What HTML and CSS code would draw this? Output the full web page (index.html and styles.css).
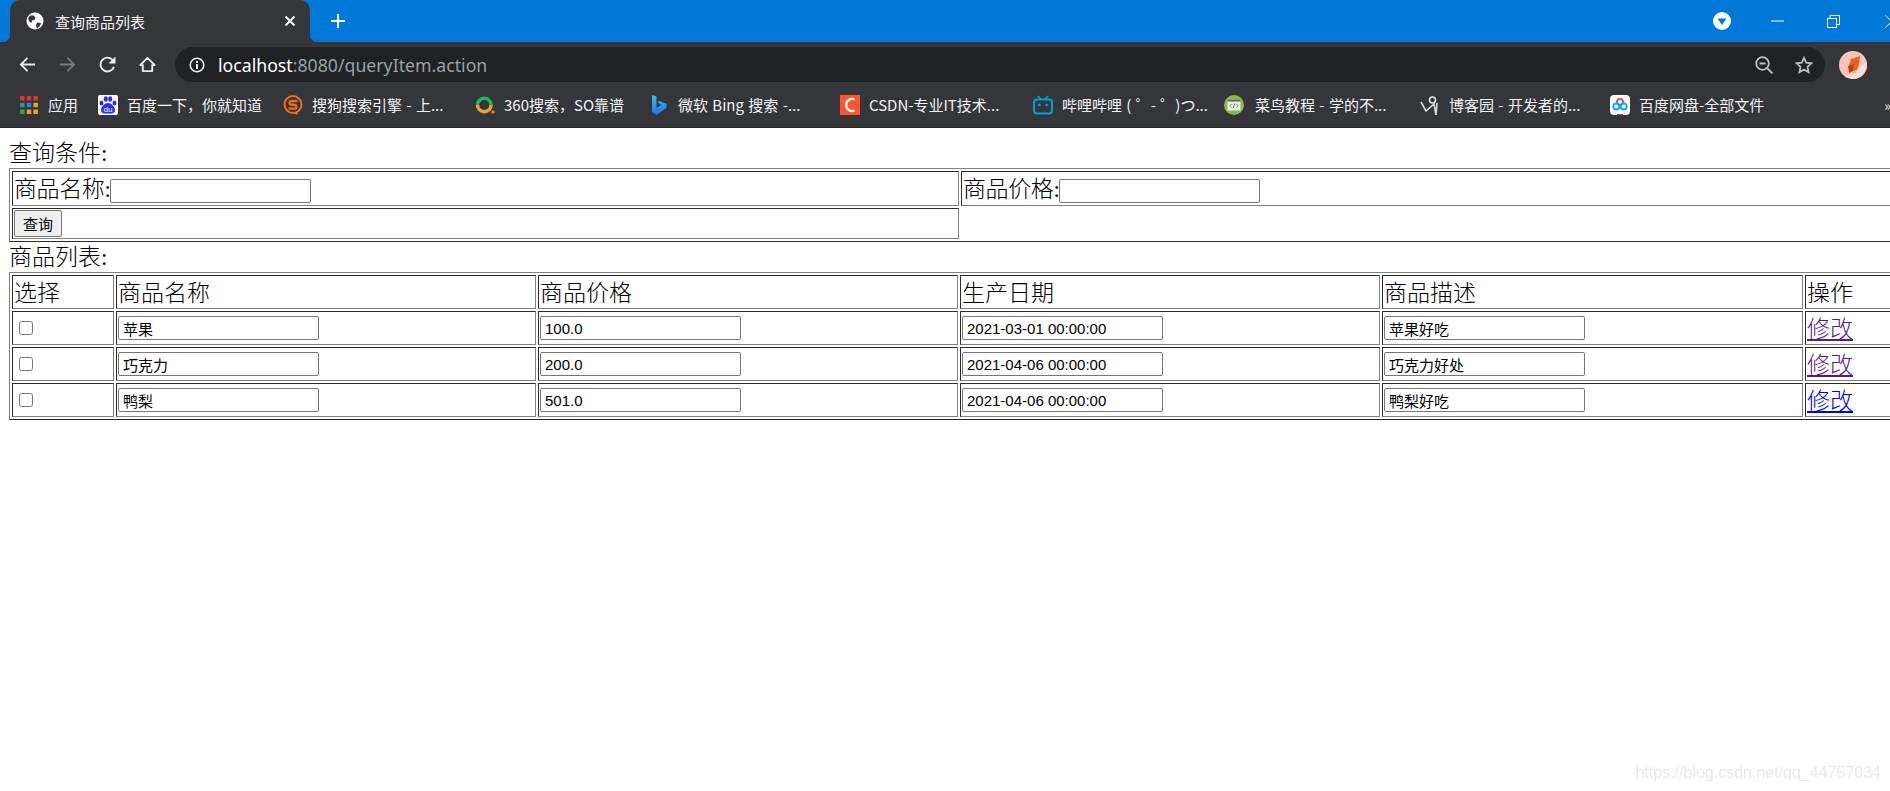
FILE: index.html
```html
<!DOCTYPE html>
<html lang="zh-CN">
<head>
    <meta charset="UTF-8">
    <title>查询商品列表</title>
    <link rel="stylesheet" href="styles.css">
</head>
<body>
    <div class="browser">
        <div class="tabstrip">
            <div class="tab">
                <svg class="tab-icon" viewBox="0 0 18 18"><circle cx="9" cy="9" r="8.5" fill="#fff"/><path d="M4 3.500l3.500 0 2 2-1 2.500-2.500.5-.5 2.500-2-1.500-1.500-3zM11 10.500l4 .5-1.500 3.500-2.500 2-1-3z" fill="#35363a"/></svg>
                <span class="tab-title">查询商品列表</span>
                <svg class="tab-close" viewBox="0 0 12 12"><path d="M1.500 1.500l9 9M10.500 1.500l-9 9" stroke="#fff" stroke-width="1.800"/></svg>
            </div>
            <svg class="new-tab" viewBox="0 0 16 16"><path d="M8 1v14M1 8h14" stroke="#fff" stroke-width="2"/></svg>
            <div class="window-controls">
                <svg class="profile-drop" viewBox="0 0 18 18"><circle cx="9" cy="9" r="9" fill="#fff"/><path d="M4.500 6.500h9L9 13z" fill="#0078d7"/></svg>
                <svg class="win-min" viewBox="0 0 13 2"><path d="M0 1h13" stroke="#fff"/></svg>
                <svg class="win-max" viewBox="0 0 13 13"><path d="M.5 3.500h9v9h-9zM3 3.500v-3h9.500v9h-3" fill="none" stroke="#fff"/></svg>
                <svg class="win-close" viewBox="0 0 13 13"><path d="M.5.5l12 12M12.500.5l-12 12" stroke="#fff"/></svg>
            </div>
        </div>
        <div class="toolbar">
            <svg class="nav" viewBox="0 0 18 18"><path d="M17 9H2M9 2L2 9l7 7" fill="none" stroke="#e8eaed" stroke-width="2"/></svg>
            <svg class="nav" viewBox="0 0 18 18"><path d="M1 9h15M9 2l7 7-7 7" fill="none" stroke="#77797c" stroke-width="2"/></svg>
            <svg class="nav" viewBox="0 0 18 18"><path d="M15.800 11.500A7.300 7.300 0 1 1 14 3.800L16 6.300" fill="none" stroke="#e8eaed" stroke-width="2"/><path d="M17.500 .5v7.500H10z" fill="#e8eaed"/></svg>
            <svg class="nav" viewBox="0 0 18 18"><path d="M9 2L1.500 9.500H4V16h10V9.500h2.500z" fill="none" stroke="#e8eaed" stroke-width="2" stroke-linejoin="round"/></svg>
            <div class="omnibox">
                <svg class="info" viewBox="0 0 16 16"><circle cx="8" cy="8" r="6.800" fill="none" stroke="#e8eaed" stroke-width="1.600"/><path d="M7 7h2v5H7zM7 4h2v2H7z" fill="#e8eaed"/></svg>
                <span class="url"><span class="host">localhost</span>:8080/queryItem.action</span>
                <svg class="zoom-out" viewBox="0 0 18 18"><circle cx="7.500" cy="7.500" r="6.300" fill="none" stroke="#bdc1c6" stroke-width="1.800"/><path d="M4.500 7.500h6M12 12l5.500 5.500" stroke="#bdc1c6" stroke-width="1.800"/></svg>
                <svg class="star" viewBox="0 0 18 18"><path d="M9 1.800l2.200 4.900 5.300.6-4 3.600 1.100 5.300L9 13.500l-4.600 2.700 1.100-5.300-4-3.600 5.300-.6z" fill="none" stroke="#bdc1c6" stroke-width="1.700"/></svg>
            </div>
            <svg class="avatar" viewBox="0 0 28 28"><circle cx="14" cy="14" r="14" fill="#f7c4b8"/><path d="M28 11L6 26l8 2a14 14 0 0 0 14-14z" fill="#fbdcd3"/><path d="M12 8l9-3-1 8-2 6-6 2-2-7z" fill="#e8641e"/><path d="M9 15l6-2-1 7-4 2z" fill="#b8430f"/><path d="M13 21l4-2v3l-3 1z" fill="#e8b888"/></svg>
        </div>
        <div class="bookmarks">
            <div class="bm"><svg class="bm-icon" viewBox="0 0 18 18"><path d="M1 1h4v4H1zM7 1h4v4H7zM13 1h4v4h-4z" fill="#d9392f"/><path d="M1 7h4v4H1z" fill="#2f9e6e"/><path d="M7 7h4v4H7z" fill="#2f7fe0"/><path d="M13 7h4v4h-4z" fill="#e8a820"/><path d="M1 13h4v4H1z" fill="#34a853"/><path d="M7 13h4v4H7zM13 13h4v4h-4z" fill="#f0a010"/></svg><span>应用</span></div>
            <div class="bm"><svg class="bm-icon" viewBox="0 0 20 20"><rect width="20" height="20" rx="2" fill="#fff"/><path d="M10 8c-3 0-7 3.500-7 7 0 3.500 3.500 4 7 3.500 3.500.5 7 0 7-3.500 0-3.500-4-7-7-7z" fill="#2932e1"/><ellipse cx="3.500" cy="8" rx="2" ry="2.600" fill="#2932e1"/><ellipse cx="7.800" cy="4" rx="2" ry="2.800" fill="#2932e1"/><ellipse cx="12.200" cy="4" rx="2" ry="2.800" fill="#2932e1"/><ellipse cx="16.500" cy="8" rx="2" ry="2.600" fill="#2932e1"/><text x="10" y="17" class="du">du</text></svg><span>百度一下，你就知道</span></div>
            <div class="bm"><svg class="bm-icon" viewBox="0 0 20 20"><circle cx="10" cy="9.500" r="8.500" fill="none" stroke="#f26a1b" stroke-width="2"/><path d="M14.500 6H8a2 2 0 0 0 0 3.800h4a2 2 0 0 1 0 3.800H5.500" fill="none" stroke="#f26a1b" stroke-width="2.400"/><path d="M11 18h4l-1 2z" fill="#f26a1b"/></svg><span>搜狗搜索引擎 - 上...</span></div>
            <div class="bm"><svg class="bm-icon" viewBox="0 0 20 20"><path d="M2.500 10a6.800 6.800 0 0 1 13.600 0" fill="none" stroke="#1fb45c" stroke-width="3.400"/><path d="M2.500 10a6.800 6.800 0 0 0 13.600 0" fill="none" stroke="#f0a030" stroke-width="3.400"/><circle cx="18" cy="17" r="1.800" fill="#f07820"/></svg><span>360搜索，SO靠谱</span></div>
            <div class="bm"><svg class="bm-icon" viewBox="0 0 20 20"><defs><linearGradient id="bing" x1="0" y1="0" x2="0" y2="1"><stop offset="0" stop-color="#35c1f1"/><stop offset="1" stop-color="#2470e8"/></linearGradient></defs><path d="M3 0l4.500 1.500v11.500l5-3-2.500-1.200-1-3 8.500 3v4L7.500 20 3 17z" fill="url(#bing)"/></svg><span>微软 Bing 搜索 -...</span></div>
            <div class="bm"><svg class="bm-icon" viewBox="0 0 20 20"><rect width="20" height="20" fill="#fc5531"/><path d="M14.500 4.500a6 6 0 1 0 0 11" fill="none" stroke="#fff" stroke-width="2.200"/></svg><span>CSDN-专业IT技术...</span></div>
            <div class="bm"><svg class="bm-icon" viewBox="0 0 20 20"><path d="M5 1l3 3.500M15 1l-3 3.500" stroke="#00a1d6" stroke-width="1.600"/><rect x="1" y="4.500" width="18" height="14" rx="3" fill="none" stroke="#00a1d6" stroke-width="2"/><path d="M5 10.500l2.500-1M15 10.500l-2.500-1" stroke="#00a1d6" stroke-width="2"/></svg><span>哔哩哔哩 ( ゜- ゜)つ...</span></div>
            <div class="bm bm-wide"><svg class="bm-icon" viewBox="0 0 20 20"><circle cx="10" cy="10" r="10" fill="#8cb848"/><rect x="3.500" y="4.500" width="13" height="11" fill="#e8ece0"/><rect x="3.500" y="4.500" width="13" height="2" fill="#5c6650"/><path d="M7.500 9L6 10.700l1.500 1.700M12.500 9l1.500 1.700-1.500 1.700M10.700 8.500l-1.400 4.500" fill="none" stroke="#5c6650" stroke-width=".8"/></svg><span>菜鸟教程 - 学的不...</span></div>
            <div class="bm"><svg class="bm-icon" viewBox="0 0 20 20"><circle cx="12.500" cy="5" r="3" fill="none" stroke="#e8e8e8" stroke-width="1.500"/><path d="M1 7l5 9 8-7 2 11 1-12" fill="none" stroke="#dcdcdc" stroke-width="1.600"/></svg><span>博客园 - 开发者的...</span></div>
            <div class="bm"><svg class="bm-icon" viewBox="0 0 20 20"><rect width="20" height="20" rx="4" fill="#fff"/><circle cx="10" cy="6.800" r="3" fill="none" stroke="#ef3f4b" stroke-width="1.800"/><circle cx="6.300" cy="11.500" r="3" fill="none" stroke="#06a7ff" stroke-width="1.800"/><circle cx="13.700" cy="11.500" r="3" fill="none" stroke="#06a7ff" stroke-width="1.800"/><path d="M7 19h3v1H7z" fill="#2468f2"/><path d="M10 19h3v1h-3z" fill="#ef3f4b"/></svg><span>百度网盘-全部文件</span></div>
            <span class="bm-more">»</span>
        </div>
    </div>

    <div class="page">
        <form>
            <div class="caption">查询条件:</div>
            <table class="grid search-table">
                <colgroup><col class="col-half"><col class="col-half"></colgroup>
                <tr class="search-row">
                    <td>商品名称:<input type="text" class="field"></td>
                    <td>商品价格:<input type="text" class="field"></td>
                </tr>
                <tr class="button-row">
                    <td><button type="button" class="query">查询</button></td>
                </tr>
            </table>
            <div class="caption">商品列表:</div>
            <table class="grid item-table">
                <colgroup>
                    <col class="col-check">
                    <col class="col-wide">
                    <col class="col-wide">
                    <col class="col-wide">
                    <col class="col-desc">
                    <col class="col-action">
                </colgroup>
                <tr>
                    <td class="text-cell">选择</td>
                    <td class="text-cell">商品名称</td>
                    <td class="text-cell">商品价格</td>
                    <td class="text-cell">生产日期</td>
                    <td class="text-cell">商品描述</td>
                    <td class="text-cell">操作</td>
                </tr>
                <tr>
                    <td><input type="checkbox" class="pick"></td>
                    <td><input type="text" class="field" value="苹果"></td>
                    <td><input type="text" class="field" value="100.0"></td>
                    <td><input type="text" class="field" value="2021-03-01 00:00:00"></td>
                    <td><input type="text" class="field" value="苹果好吃"></td>
                    <td class="text-cell"><a href="#" class="visited">修改</a></td>
                </tr>
                <tr>
                    <td><input type="checkbox" class="pick"></td>
                    <td><input type="text" class="field" value="巧克力"></td>
                    <td><input type="text" class="field" value="200.0"></td>
                    <td><input type="text" class="field" value="2021-04-06 00:00:00"></td>
                    <td><input type="text" class="field" value="巧克力好处"></td>
                    <td class="text-cell"><a href="#" class="visited">修改</a></td>
                </tr>
                <tr>
                    <td><input type="checkbox" class="pick"></td>
                    <td><input type="text" class="field" value="鸭梨"></td>
                    <td><input type="text" class="field" value="501.0"></td>
                    <td><input type="text" class="field" value="2021-04-06 00:00:00"></td>
                    <td><input type="text" class="field" value="鸭梨好吃"></td>
                    <td class="text-cell"><a href="#">修改</a></td>
                </tr>
            </table>
        </form>
        <div class="watermark">https://blog.csdn.net/qq_44757034</div>
    </div>
</body>
</html>
```

FILE: styles.css
```css
html, body {
    height: 100%;
    margin: 0;
    overflow: hidden;
    background-color: #fff;
}
body {
    display: flex;
    flex-direction: column;
}

/* browser frame */
.browser {
    background-color: #35363a;
    color: #f1f3f4;
    font-family: "Noto Sans CJK SC", "Noto Sans", sans-serif;
}
.tabstrip {
    display: flex;
    align-items: center;
    height: 42px;
    padding-left: 10px;
    background-color: #0078d7;
}
.tab {
    position: relative;
    display: flex;
    align-items: center;
    width: 300px;
    height: 42px;
    box-sizing: border-box;
    padding: 0 14px 0 16px;
    background-color: #35363a;
    border-radius: 10px 10px 0 0;
}
.tab::before,
.tab::after {
    content: "";
    position: absolute;
    bottom: 0;
    width: 8px;
    height: 8px;
}
.tab::before {
    left: -8px;
    background: radial-gradient(circle at 0 0, transparent 8px, #35363a 8.5px);
}
.tab::after {
    right: -8px;
    background: radial-gradient(circle at 100% 0, transparent 8px, #35363a 8.5px);
}
.tab-icon {
    width: 18px;
    height: 18px;
}
.tab-title {
    flex: 1;
    margin-left: 11px;
    font-size: 15px;
}
.tab-close {
    width: 12px;
    height: 12px;
}
.new-tab {
    width: 16px;
    height: 16px;
    margin-left: 20px;
}
.window-controls {
    display: flex;
    align-items: center;
    margin-left: auto;
}
.profile-drop {
    width: 18px;
    height: 18px;
    margin-right: 40px;
}
.win-min {
    width: 13px;
    height: 2px;
    margin-right: 43px;
}
.win-max {
    width: 13px;
    height: 13px;
    margin-right: 45px;
}
.win-close {
    width: 13px;
    height: 13px;
    margin-right: -8px;
}
.toolbar {
    display: flex;
    align-items: center;
    height: 40px;
    box-sizing: border-box;
    padding: 5px 23px 0 19px;
}
.nav {
    width: 17px;
    height: 17px;
    margin-right: 23px;
}
.omnibox {
    display: flex;
    align-items: center;
    flex: 1;
    height: 35px;
    margin-left: -4px;
    padding: 0 12px 0 14px;
    background-color: #202124;
    border-radius: 18px;
}
.info {
    width: 16px;
    height: 16px;
}
.url {
    flex: 1;
    margin-left: 13px;
    font-family: "Noto Sans", sans-serif;
    font-size: 17.7px;
    color: #9aa0a6;
}
.host {
    color: #fff;
}
.zoom-out {
    width: 18px;
    height: 18px;
    margin-right: 22px;
}
.star {
    width: 18px;
    height: 18px;
}
.avatar {
    width: 28px;
    height: 28px;
    margin-left: 14px;
}
.bookmarks {
    display: grid;
    grid-template-columns: 79px 185px 192px 174px 191px 193px 191px 196px 190px 1fr auto;
    align-items: center;
    height: 46px;
    box-sizing: border-box;
    padding-left: 19px;
    border-bottom: 1px solid #28292c;
    font-size: 15px;
    word-spacing: 1px;
}
.bm {
    display: flex;
    align-items: center;
    gap: 9px;
    white-space: nowrap;
}
.bm-wide {
    gap: 11px;
}
.bm-icon {
    width: 20px;
    height: 20px;
    flex: none;
}
.du {
    font-family: "Liberation Sans", sans-serif;
    font-size: 8px;
    fill: #fff;
    text-anchor: middle;
}
.bm-more {
    margin-right: -1px;
    font-size: 14px;
}

/* page content */
.page {
    position: relative;
    flex: 1;
    padding: 10px 0 0 9px;
    overflow: hidden;
    font-family: "Liberation Serif", "Noto Sans CJK SC", serif;
    font-size: 23px;
    font-weight: 300;
    color: #000;
}
.caption {
    height: 30px;
    line-height: 31px;
}
.grid {
    table-layout: fixed;
    border: 1px outset grey;
    border-spacing: 2px;
}
.grid td {
    box-sizing: border-box;
    padding: 1px;
    border: 1px inset grey;
    line-height: 29px;
    vertical-align: middle;
    white-space: nowrap;
}
.search-table {
    width: 1900px;
}
.col-half {
    width: 947px;
}
.search-row td {
    height: 35px;
    padding: 2px 1px 0;
    line-height: 30px;
    letter-spacing: -0.4px;
}
.search-row .field {
    vertical-align: baseline;
}
.button-row td {
    height: 31px;
    line-height: 27px;
}
.item-table {
    width: 1900px;
}
.item-table td {
    height: 34px;
}
.item-table .text-cell {
    padding: 2px 1px 0;
}
.item-table .field,
.item-table .pick {
    display: block;
}
.col-check {
    width: 102px;
}
.col-wide {
    width: 420px;
}
.col-desc {
    width: 421px;
}
.col-action {
    width: 101px;
}
.field {
    box-sizing: border-box;
    width: 201px;
    height: 24px;
    padding: 1px 4px;
    border: 1px solid #767676;
    border-radius: 2px;
    font-family: "Liberation Sans", "Noto Sans CJK SC", sans-serif;
    font-size: 15px;
    letter-spacing: 0;
    color: #000;
}
.query {
    box-sizing: border-box;
    display: block;
    width: 48px;
    height: 27px;
    margin: 0;
    padding: 0;
    background-color: #efefef;
    border: 1px solid #767676;
    border-radius: 2px;
    font-family: "Noto Sans CJK SC", sans-serif;
    font-size: 15px;
    color: #000;
}
.pick {
    width: 14px;
    height: 14px;
    margin: 0 0 0 5px;
}
a {
    color: #0000ee;
}
a.visited {
    color: #551a8b;
}
.watermark {
    position: absolute;
    right: 9px;
    bottom: 9px;
    font-family: "Liberation Sans", sans-serif;
    font-size: 16px;
    color: #e8e8e8;
    filter: blur(0.5px);
}
```
